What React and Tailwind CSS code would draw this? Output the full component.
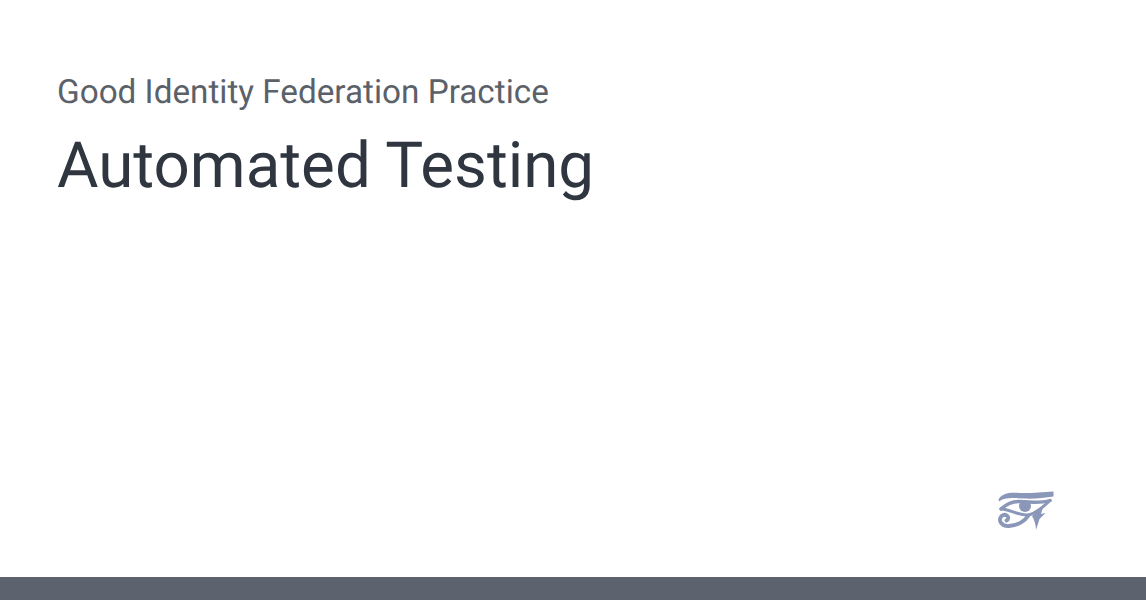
export default function App() {
  return (
    <div className="flex h-[600px] flex-col bg-white font-['Roboto',sans-serif] [text-rendering:geometricPrecision]">
      <main className="flex flex-1 flex-col px-[57px] pt-[71px]">
        <p className="text-[33.28px] leading-[44px] text-[#5b6169]">Good Identity Federation Practice</p>
        <h1 className="mt-[13px] text-[63.68px] leading-[76px] text-[#2f363f]">Automated Testing</h1>
        <div className="mt-auto flex justify-end pb-[47px] pr-[35px]">
          <svg width="56" height="40" viewBox="0 0 56 40" className="blur-[0.45px]">
            <path fill="#8a97b8" d="M0.5 9.5 C 4 3, 12 2, 22 3 C 32 3.5, 44 2, 55.5 1.5 L 55.5 6.5 C 46 8, 36 9, 26 8.5 C 16 8, 7 6.5, 1 11.5 Z" />
            <g fill="none" stroke="#8a97b8" strokeLinecap="round" strokeLinejoin="round">
              <path strokeWidth="3.4" d="M3 19 C 9 13.5, 15 11, 22 11.5 C 32 12.5, 44 13, 52 10.5" />
              <path strokeWidth="3" d="M3 19 C 10 18.5, 19 25, 29 25 C 36 25, 44 18, 52 10.5" />
              <path strokeWidth="3.8" d="M30 26 C 27 31, 20 35.5, 11 36 C 3 36.5, 0 30, 3.5 26 C 8 22.5, 13 28, 8.5 30.5" />
            </g>
            <circle cx="27" cy="16" r="6" fill="#8a97b8" />
            <path fill="#8a97b8" d="M34 26 L 45 17 L 43 24 L 47.5 23 L 41.5 29 L 38 40 C 38 35, 36.5 30, 34 26 Z" />
          </svg>
        </div>
      </main>
      <div className="h-[23px] bg-[#5c636e]" />
    </div>
  );
}
